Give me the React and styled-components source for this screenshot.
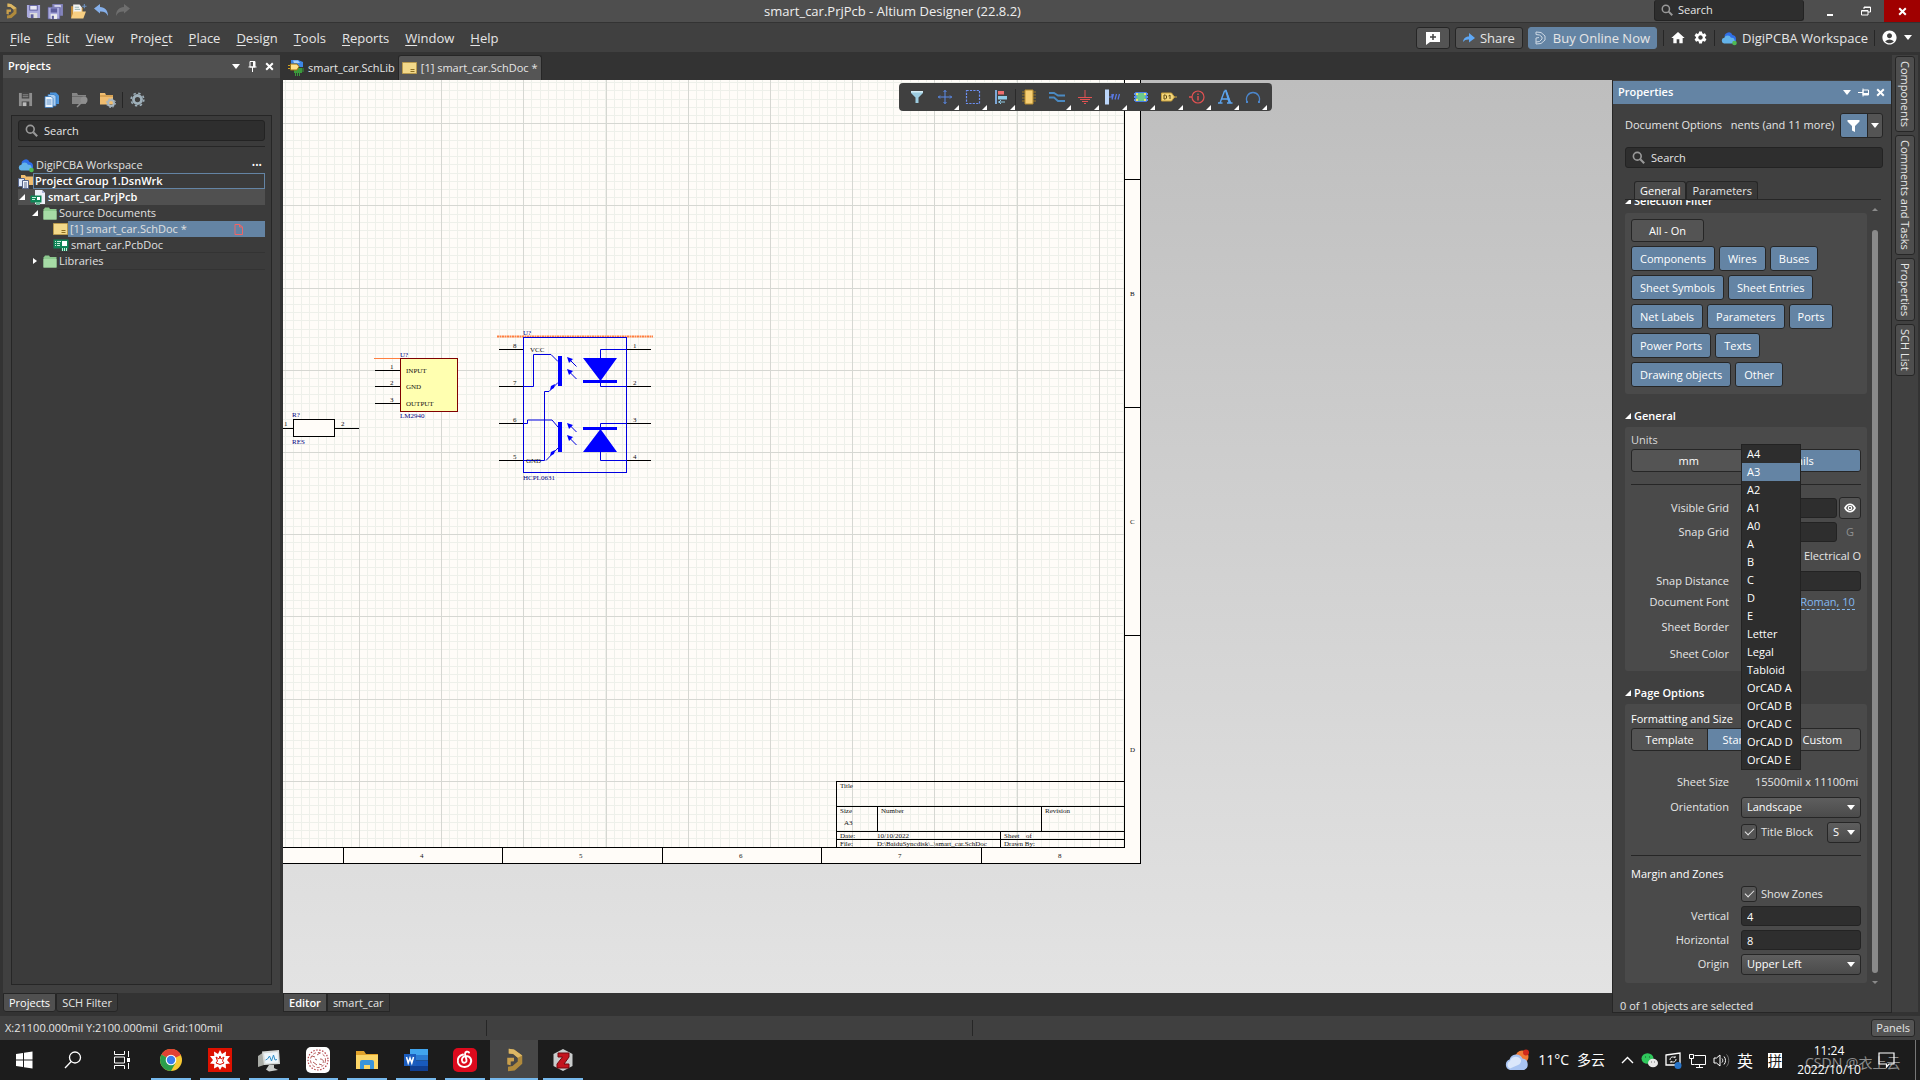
import React from 'react'
import styled, { createGlobalStyle, css } from 'styled-components'
import { MdAccountCircle, MdHome, MdSettings } from 'react-icons/md'

const selectionRows = [
  ['Components', 'Wires', 'Buses'],
  ['Sheet Symbols', 'Sheet Entries'],
  ['Net Labels', 'Parameters', 'Ports'],
  ['Power Ports', 'Texts'],
  ['Drawing objects', 'Other'],
]

const sheetSizes = [
  'A4', 'A3', 'A2', 'A1', 'A0', 'A', 'B', 'C', 'D', 'E', 'Letter', 'Legal',
  'Tabloid', 'OrCAD A', 'OrCAD B', 'OrCAD C', 'OrCAD D', 'OrCAD E',
]

// [before, accelerator, after]
const menus = [
  ['', 'F', 'ile'], ['', 'E', 'dit'], ['', 'V', 'iew'], ['Proje', 'c', 't'],
  ['', 'P', 'lace'], ['', 'D', 'esign'], ['', 'T', 'ools'], ['', 'R', 'eports'],
  ['', 'W', 'indow'], ['', 'H', 'elp'],
]

/* ---------- icons ---------- */

const Svg = ({ size = 16, w, h, box = '0 0 16 16', children }) => (
  <svg width={w || size} height={h || size} viewBox={box} fill='none' aria-hidden='true'>
    {children}
  </svg>
)

const AltiumLogo = ({ size = 16 }) => (
  <Svg size={size}>
    <path d='M4.500 .5L8 1l5.500 4v5.500L8.500 15 4 15.500v-3l3-.5 3.500-3V6.500L7.500 4l-3-.3z' fill='#b08a3c' />
    <path d='M4.500 .5L8 1l5.500 4-3 1.500L7.500 4l-3-.3z' fill='#dcb765' />
    <path d='M3.500 6.500L8 6.500v2.300L5.800 9v2.500L3.500 11z' fill='#caa04c' />
  </Svg>
)

const SearchIcon = ({ size = 13, color = '#999' }) => (
  <Svg size={size}>
    <circle cx='6.500' cy='6.500' r='4.800' stroke={color} strokeWidth='2' />
    <path d='M10.200 10.200L15 15' stroke={color} strokeWidth='2.600' />
  </Svg>
)

const Disk = ({ color = '#a9a9dc', dark = '#5c5c9c' }) => (
  <Svg size={15}>
    <path d='M1 1h14v14H2.500L1 13.500z' fill={color} />
    <path d='M3.500 1h9v6h-9z' fill={dark} />
    <path d='M4.500 2h7v4h-7z' fill='#e8e8f4' />
    <path d='M4 9.500h8V15H4z' fill='#ddd' />
    <path d='M5 11h3v4H5z' fill={dark} />
  </Svg>
)

const GreyDisk = () => (
  <Svg size={15}>
    <path d='M1 1h14v14H1z' fill='#8e8e8e' />
    <path d='M4 1h8v6H4zM4 10h8v5H4z' fill='#444' />
    <path d='M5 3h6M5 5h6' stroke='#8e8e8e' />
    <path d='M5 11h4v4H5z' fill='#bbb' />
  </Svg>
)

const DiskStack = () => (
  <Svg size={17}>
    <path d='M5 1h10v11H5z' fill='#8484bc' />
    <path d='M7 2h6v2H7z' fill='#ddddf0' />
    <path d='M1 4h11v11H1z' fill='#a9a9dc' stroke='#5c5c9c' strokeWidth='.6' />
    <path d='M3.500 5h6v4h-6z' fill='#5c5c9c' />
    <path d='M3.500 10.500h6V15h-6z' fill='#eee' />
    <path d='M4.500 12h2v3h-2z' fill='#5c5c9c' />
  </Svg>
)

const OpenFolder = () => (
  <Svg size={17}>
    <path d='M1 3h5l1 1.500h5V14H1z' fill='#c58f3c' />
    <path d='M3 1.500h6L11 4v6H3z' fill='#f3f3f3' />
    <path d='M4.500 4h4M4.500 6h5' stroke='#8aa' strokeWidth='.8' />
    <path d='M3.500 8H15l-2.500 6.500H1z' fill='#f8cf82' />
    <path d='M13.500 1v4M11.500 3h4' stroke='#6f95c4' />
  </Svg>
)

const Undo = ({ flip, color = '#86b0ea' }) => (
  <Svg size={16}>
    <g transform={flip ? 'translate(16 0) scale(-1 1)' : undefined}>
      <path d='M1 5.500L7 1v3c5 0 8 3.500 8 9-1.500-3.500-4-4.700-8-4.500v2z' fill={color} />
    </g>
  </Svg>
)

const Cloud = ({ size = 16 }) => (
  <Svg size={size}>
    <path d='M4 8a4 4 0 0 1 7.500-3A4 4 0 0 1 15 9v3H4z' fill='#2f6fe8' />
    <path d='M3 13.500a2.900 2.900 0 0 1 .3-5.700 3.600 3.600 0 0 1 6.700 0 2.900 2.900 0 0 1 1.500 5.700z' fill='#63b3ea' />
    <circle cx='13.500' cy='13' r='2.300' fill='#4fb955' />
  </Svg>
)

const Caret = ({ w = 8, color = '#fff' }) => (
  <Svg w={w} h={w / 2 + 1} box='0 0 8 5'>
    <path d='M0 0h8L4 5z' fill={color} />
  </Svg>
)

const Pin = ({ side }) => (
  <Svg size={11} box='0 0 11 11'>
    <g transform={side ? 'rotate(90 5.5 5.5)' : undefined}>
      <path d='M3 .5h5v5.500H3zM1.500 6h8M5.500 6v5' stroke='#fff' />
      <path d='M6 1h2v5H6z' fill='#fff' />
    </g>
  </Svg>
)

const Cross = ({ size = 9 }) => (
  <Svg size={size} box='0 0 9 9'>
    <path d='M1.200 1.200l6.600 6.600M7.800 1.200L1.200 7.800' stroke='#fff' strokeWidth='2' />
  </Svg>
)

const Expander = ({ closed }) => (
  <Svg size={6} box='0 0 6 6'>
    {closed ? <path d='M1 0l4 3-4 3z' fill='#fff' /> : <path d='M6 0v6H0z' fill='#fff' />}
  </Svg>
)

const Folder = () => (
  <Svg w={14} h={13} box='0 0 14 13'>
    <path d='M1 2l1-1.500h4L7 2h6.500v10.500H.5V2z' fill='#8cc98e' />
    <path d='M.5 4h13v8.500H.5z' fill='#a6dba6' />
  </Svg>
)

const SchIcon = () => (
  <Svg w={15} h={12} box='0 0 15 12'>
    <path d='M.5.5h14v11H.5z' fill='#f3d98a' stroke='#b99a4e' />
    <path d='M8.500 7.500h4M8.500 9.500h4' stroke='#8d6f22' />
  </Svg>
)

const PcbIcon = () => (
  <Svg w={16} h={12} box='0 0 16 12'>
    <path d='M.5.5h15v9h-1V12h-6V9.500h-8z' fill='#0f8557' />
    <path d='M2 2.500h1M4 2.500h4M2 4.500h1M4 4.500h3M2 6.500h1M4 6.500h3M9.500 9v3M11.500 9v3M13.500 9v3' stroke='#c6f0dc' />
    <path d='M9 2h5v5H9z' fill='#fff' />
  </Svg>
)

const PrjIcon = () => (
  <Svg w={16} h={15} box='0 0 16 15'>
    <path d='M5 0h7l3 3v11H5z' fill='#eef0fa' />
    <path d='M12 0v3h3z' fill='#a9b4d8' />
    <path d='M.5 5.500h11v7H10V15H6v-2.500H.5z' fill='#0f8557' />
    <path d='M2 7.500h4M2 9.500h3M7 12v3M9 12v3' stroke='#c6f0dc' />
    <path d='M7 7h3v3H7z' fill='#fff' />
  </Svg>
)

const GroupIcon = () => (
  <Svg w={15} h={15} box='0 0 15 15'>
    <path d='M3 1h4l1 1.500h7V11H3z' fill='#f0bd70' />
    <path d='M.5 4.500h6v8h-6z' fill='#dfe8f8' stroke='#56658a' />
    <path d='M4.500 6.500h6v8h-6z' fill='#eef3fc' stroke='#56658a' />
    <path d='M6 9h3M6 11h3M6 13h3' stroke='#56658a' />
  </Svg>
)

const LibIcon = () => (
  <Svg w={16} h={17} box='0 0 16 17'>
    <path d='M3 1h7l5 2v5H3z' fill='#3c86e6' />
    <path d='M5 1.500h5L12 4H6z' fill='#a4cdfa' />
    <path d='M6 9h8v5H6z' fill='#3a9a3c' />
    <path d='M7.500 14v3M9.500 14v3M11.500 14v3M14 10h2M14 12h2' stroke='#3a9a3c' />
    <path d='M2.500 5H9l2 2.500L9 11H2.500z' fill='#ffe18c' stroke='#9a6f10' />
    <path d='M0 6.500h2M0 9.500h2' stroke='#d0a020' />
  </Svg>
)

const CopyDocs = () => (
  <Svg size={16}>
    <path d='M6 .5h6l3 3V12H6z' fill='#4a94dd' />
    <path d='M4 2.500h6l2 2V14H4z' fill='#a9cdf0' stroke='#3577bd' strokeWidth='.8' />
    <path d='M1 4.500h6l2 2V15.500H1z' fill='#eaf4fd' stroke='#3577bd' strokeWidth='.8' />
    <path d='M2.500 8h5M2.500 10h5M2.500 12h5' stroke='#3577bd' strokeWidth='.8' />
  </Svg>
)

const FolderSearch = () => (
  <Svg w={17} h={16} box='0 0 17 16'>
    <path d='M1 1h5l1 2h8v9H1z' fill='#858585' />
    <path d='M1 4.500h14' stroke='#6a6a6a' />
    <circle cx='13' cy='8' r='3.500' fill='#8f8f8f' />
    <path d='M10.500 10.500L6 15' stroke='#8f8f8f' strokeWidth='1.500' />
  </Svg>
)

const FolderGear = () => (
  <Svg w={17} h={16} box='0 0 17 16'>
    <path d='M1 1h5l1 2h7v9.500H1z' fill='#f0bd70' />
    <path d='M1 4h13' stroke='#c08a3a' />
    <circle cx='12' cy='11' r='3' stroke='#a8b6c0' strokeWidth='2' />
    <circle cx='12' cy='11' r='4.500' stroke='#a8b6c0' strokeDasharray='1.700 1.830' />
  </Svg>
)

const GreyGear = () => (
  <Svg size={15}>
    <circle cx='8' cy='8' r='4.300' stroke='#9fb0ba' strokeWidth='3' />
    <circle cx='8' cy='8' r='6.800' stroke='#9fb0ba' strokeWidth='1.600' strokeDasharray='2.600 2.740' />
  </Svg>
)

const Funnel = ({ color = '#fff', size = 13 }) => (
  <Svg size={size} box='0 0 13 13'>
    <path d='M.5 1h12v1.500L8 7v6L5 11.500V7L.5 2.500z' fill={color} />
  </Svg>
)

const Eye = () => (
  <Svg w={12} h={10} box='0 0 12 10'>
    <path d='M1 5c1.500-2.800 3-3.700 5-3.700S9.500 2.200 11 5C9.500 7.800 8 8.700 6 8.700S2.500 7.800 1 5z' stroke='#fff' strokeWidth='1.600' />
    <circle cx='6' cy='5' r='1.700' stroke='#fff' strokeWidth='1.200' />
  </Svg>
)

const toolIcons = [
  <><path d='M2 2h12v2L9.500 8.500V14h-3V8.500L2 4z' fill='#9ccbe0' /><path d='M2 2h12v1.500H2z' fill='#d5ecf5' /></>,
  <path d='M8 1v14M1 8h14M6.500 3L8 1.500 9.500 3M6.500 13L8 14.500 9.500 13M3 6.500L1.500 8 3 9.500M13 6.500L14.500 8 13 9.500' stroke='#5a8ae8' />,
  <path d='M1.500 1.500h13v13h-13z' stroke='#6c8ff2' strokeWidth='1.200' strokeDasharray='2.200 1.200' />,
  <><path d='M2 1h2v14H2z' fill='#7ea8d8' /><path d='M5 2h6v3.500H5z' fill='#ef6f6f' /><path d='M5 7h9v3.500H5z' fill='#8fcbe6' /><path d='M5 13h7M8 11l-2 2 2 2' stroke='#8fcbe6' /></>,
  <><path d='M1 3h14M1 6h14M1 9h14M1 12h14' stroke='#9a7624' strokeWidth='1.200' /><path d='M4 1h8v14H4z' fill='#f7cf74' stroke='#b58a2d' /></>,
  <path d='M0 4h5l4 2.500h7M0 8.500h5l4 3.500h7' stroke='#4b8ac2' strokeWidth='1.800' />,
  <path d='M8 1v7M1 8.500h14M3 10.500h10M5 12.500h6M7 14.500h2' stroke='#e25252' />,
  <><path d='M0 .5h4v15H0z' fill='#bcd6fa' /><path d='M4 8h3M7 10.500L8.500 5M10 10.500L11.500 5M13 10.500L14.500 5M7 5v3' stroke='#5a7bea' strokeWidth='1.200' /></>,
  <><path d='M2.500 3.500h11v9h-11z' fill='#6ec98d' stroke='#4a7de6' /><path d='M1 5h3M1 8h3M1 11h3M12 5h3M12 8h3M12 11h3' stroke='#5a8df0' strokeWidth='2' /><path d='M3 4h2v2H3zM11 4h2v2h-2zM3 10h2v2H3zM11 10h2v2h-2z' fill='#f0e070' /></>,
  <><path d='M.5 4h10l3 4-3 4H.5zM13 8h3' fill='#f3d67c' stroke='#c8a03c' /><path d='M3 6v4h1.500l1-1V7l-1-1zM7.500 7L9 6v4' stroke='#5f4812' /></>,
  <><circle cx='9' cy='8' r='6' stroke='#e25252' strokeWidth='1.200' /><path d='M0 8h3M9 7v4.500M9 4.500V6' stroke='#e25252' strokeWidth='1.400' /></>,
  <><path d='M7.500 1.500h1.500L13.500 14M7.500 2L3 14M5 10h6' stroke='#5ca4ee' strokeWidth='1.400' /><path d='M8 1.500h1.500L14 14h-2.500z' fill='#5ca4ee' /><path d='M1 14h4.500M10 14h5.500' stroke='#5ca4ee' strokeWidth='1.400' /></>,
  <><path d='M2 12.500a6.500 6.500 0 1 1 12 0' stroke='#4b86cc' strokeWidth='1.300' /><path d='M1 12h2v2H1zM13 12h2v2h-2z' fill='#4b86cc' /></>,
]

/* ---------- schematic ---------- */

// sheet coordinates: 8.22px is 100mil, origin is the visible top left corner
const range = (start, step, end) => {
  const out = []
  for (let v = start; v < end; v += step) out.push(v)
  return out
}

const INNER_X = 841
const INNER_Y = 767
const GRID = 8.22

const Schematic = () => (
  <SheetSvg width='858' height='784' viewBox='0 0 858 784'>
    <rect width='858' height='784' fill='#fffcf8' />
    <g shapeRendering='crispEdges' stroke='#eef0ea'>
      {range(-5.900, GRID, INNER_X).map((x) => (
        <path key={x} d={`M${x} 0V${INNER_Y}`} />
      ))}
      {range(2.600, GRID, INNER_Y).map((y) => (
        <path key={y} d={`M0 ${y}H${INNER_X}`} />
      ))}
    </g>
    <g shapeRendering='crispEdges' stroke='#d6d7d2'>
      {range(76.500, GRID * 10, INNER_X).map((x) => (
        <path key={x} d={`M${x} 0V${INNER_Y}`} />
      ))}
      {range(43.700, GRID * 10, INNER_Y).map((y) => (
        <path key={y} d={`M0 ${y}H${INNER_X}`} />
      ))}
    </g>

    {/* sheet border, zones and title block */}
    <g shapeRendering='crispEdges' stroke='#000' fill='none'>
      <path d='M857.500 0V783.500H0M841.500 0V767.500H0' />
      <path d='M841 99.500h16M841 327.500h16M841 555.500h16' />
      <path d='M60.500 767v16M219.500 767v16M379.500 767v16M538.500 767v16M698.500 767v16' />
      <path d='M553.500 767V701.500H841M553 726.500h288M553 751.500h288M553 759.500h288' />
      <path d='M594.500 726v25M758.500 726v25M717.500 751v16' />
    </g>
    <SheetText>
      <text x='847' y='216'>B</text>
      <text x='847' y='444'>C</text>
      <text x='847' y='672'>D</text>
      <text x='137' y='778'>4</text>
      <text x='296' y='778'>5</text>
      <text x='456' y='778'>6</text>
      <text x='615' y='778'>7</text>
      <text x='775' y='778'>8</text>
      <text x='557' y='708'>Title</text>
      <text x='557' y='733'>Size</text>
      <text x='561' y='745'>A3</text>
      <text x='598' y='733'>Number</text>
      <text x='762' y='733'>Revision</text>
      <text x='557' y='758'>Date:</text>
      <text x='594' y='758'>10/10/2022</text>
      <text x='721' y='758'>Sheet</text>
      <text x='743' y='758'>of</text>
      <text x='557' y='766'>File:</text>
      <text x='594' y='766'>D:\BaiduSyncdisk\..\smart_car.SchDoc</text>
      <text x='721' y='766'>Drawn By:</text>
    </SheetText>

    {/* R? */}
    <g shapeRendering='crispEdges' stroke='#000'>
      <path d='M0 348.500h10M52 348.500h24' />
      <path d='M10.500 339.500h41v17h-41z' fill='#fffcf8' />
    </g>
    <SheetText>
      <text x='1' y='346'>1</text>
      <text x='58' y='346'>2</text>
    </SheetText>
    <SheetText $blue>
      <text x='9' y='337'>R?</text>
      <text x='9' y='364'>RES</text>
    </SheetText>

    {/* LM2940 */}
    <g shapeRendering='crispEdges'>
      <path d='M91 278.500h27' stroke='#ff7f40' />
      <path d='M92 290.500h26M92 306.500h26M92 323.500h26' stroke='#000' />
      <path d='M117.500 278.500h57v53h-57z' fill='#ffffb0' stroke='#800000' />
    </g>
    <SheetText>
      <text x='107' y='289'>1</text>
      <text x='107' y='305'>2</text>
      <text x='107' y='322'>3</text>
      <text x='123' y='293'>INPUT</text>
      <text x='123' y='309'>GND</text>
      <text x='123' y='326'>OUTPUT</text>
    </SheetText>
    <SheetText $blue>
      <text x='117' y='277'>U?</text>
      <text x='117' y='338'>LM2940</text>
    </SheetText>

    {/* HCPL0631 */}
    <path d='M214 256.500h156' stroke='#ff7f40' strokeWidth='2' strokeDasharray='2 .5' />
    <g shapeRendering='crispEdges'>
      <path d='M216 269.500h25M216 306.500h25M216 343.500h25M216 380.500h25' stroke='#000' />
      <path d='M344 269.500h24M344 306.500h24M344 343.500h24M344 380.500h24' stroke='#000' />
      <path d='M240.500 257.500h103v135h-103z' stroke='#0000e0' fill='none' />
    </g>
    <g stroke='#0000e0' fill='none'>
      <path d='M240 306.500h10.500v-32H268l7 7M275 302.500l-9 9h-4.500v69H240' />
      <path d='M240 343.500h4.500v-3.500H269l6 7M275 368l-12 12.500' />
      <path d='M343 269.500h-25.500V278M317.500 302v4.500H343M343 343.500h-25.500v4M317.500 372v8.500H343' />
      <path d='M293.500 286.500l-7-7M293.500 299l-7-7M293.500 352l-7-7M293.500 365l-7-7' />
    </g>
    <g fill='#0000ff'>
      <path d='M275 276h4v30h-4zM275 342h4v30h-4z' />
      <path d='M300 278h34l-16.500 23zM300 300h34v3h-34zM300 347h34v3h-34zM317.500 349L334 372h-34z' />
      <path d='M284 277l6 2-4 4zM284 289l6 2-4 4zM284 343l6 2-4 4zM284 355l6 2-4 4z' />
      <path d='M272 304l-1 4-4 2 1-4zM272 370l-1 4-4 2 1-4z' />
    </g>
    <SheetText>
      <text x='230' y='268'>8</text>
      <text x='230' y='305'>7</text>
      <text x='230' y='342'>6</text>
      <text x='230' y='379'>5</text>
      <text x='350' y='268'>1</text>
      <text x='350' y='305'>2</text>
      <text x='350' y='342'>3</text>
      <text x='350' y='379'>4</text>
      <text x='247' y='272'>VCC</text>
      <text x='243' y='383'>GND</text>
    </SheetText>
    <SheetText $blue>
      <text x='240' y='255'>U?</text>
      <text x='240' y='400'>HCPL0631</text>
    </SheetText>
  </SheetSvg>
)

/* ---------- panels ---------- */

const ProjectsPanel = () => (
  <LeftColumn>
    <Panel>
      <PanelHeader>
        <h2>Projects</h2>
        <Caret />
        <Pin />
        <Cross />
      </PanelHeader>
      <PanelTools>
        <IconButton aria-label='Save'><GreyDisk /></IconButton>
        <IconButton aria-label='Copy'><CopyDocs /></IconButton>
        <IconButton aria-label='Find'><FolderSearch /></IconButton>
        <IconButton aria-label='Folder options'><FolderGear /></IconButton>
        <Separator />
        <IconButton aria-label='Settings'><GreyGear /></IconButton>
      </PanelTools>
      <TreeBox>
        <SearchField>
          <SearchIcon />
          <input aria-label='Search projects' placeholder='Search' />
        </SearchField>
        <TreeLine />
        <TreeRow>
          <Cloud />
          <TreeLabel>DigiPCBA Workspace</TreeLabel>
          <Dots>•••</Dots>
        </TreeRow>
        <TreeRow>
          <GroupIcon />
          <TreeLabel $bold $outlined>Project Group 1.DsnWrk</TreeLabel>
        </TreeRow>
        <TreeRow $indent={1} $raised>
          <Expander />
          <PrjIcon />
          <TreeLabel $bold>smart_car.PrjPcb</TreeLabel>
        </TreeRow>
        <TreeRow $indent={14}>
          <Expander />
          <Folder />
          <TreeLabel>Source Documents</TreeLabel>
        </TreeRow>
        <TreeRow $indent={35}>
          <SchIcon />
          <TreeLabel $active>
            [1] smart_car.SchDoc *
            <Svg w={9} h={11} box='0 0 9 11'>
              <path d='M1 .5h4.500L8.500 3v7.500H1zM5.500.5V3h3' stroke='#f06464' />
            </Svg>
          </TreeLabel>
        </TreeRow>
        <TreeRow $indent={35}>
          <PcbIcon />
          <TreeLabel>smart_car.PcbDoc</TreeLabel>
        </TreeRow>
        <TreeRow $indent={14}>
          <Expander closed />
          <Folder />
          <TreeLabel $ruled>Libraries</TreeLabel>
        </TreeRow>
      </TreeBox>
    </Panel>
    <BottomTabs>
      <BottomTab $active>Projects</BottomTab>
      <BottomTab>SCH Filter</BottomTab>
    </BottomTabs>
  </LeftColumn>
)

const Dropdown = ({ id, value, label, small }) => (
  <SelectBox $small={small}>
    <select id={id} aria-label={label} defaultValue={value}>
      <option>{value}</option>
    </select>
    <Caret />
  </SelectBox>
)

const PropertiesPanel = () => (
  <RightColumn>
    <PanelHeader $blue>
      <h2>Properties</h2>
      <Caret />
      <Pin side />
      <Cross />
    </PanelHeader>
    <ScopeRow>
      <span>Document Options</span>
      <span>nents (and 11 more)</span>
      <FilterGroup>
        <button aria-label='Filter'><Funnel /></button>
        <button aria-label='Filter options'><Caret /></button>
      </FilterGroup>
    </ScopeRow>
    <SearchField $wide>
      <SearchIcon />
      <input aria-label='Search properties' placeholder='Search' />
    </SearchField>
    <PropertyTabs>
      <PropertyTab $active>General</PropertyTab>
      <PropertyTab>Parameters</PropertyTab>
    </PropertyTabs>
    <ScrollArea>
      <Sections>
        <SectionTitle $clipped><Expander />Selection Filter</SectionTitle>
        <Section>
          <FilterButton $all>All - On</FilterButton>
          {selectionRows.map((row) => (
            <FilterRow key={row[0]}>
              {row.map((name) => (
                <FilterButton key={name}>{name}</FilterButton>
              ))}
            </FilterRow>
          ))}
        </Section>

        <SectionTitle><Expander />General</SectionTitle>
        <Section>
          <GroupLabel>Units</GroupLabel>
          <Segmented>
            <button>mm</button>
            <button className='on'>mils</button>
          </Segmented>
          <Rule />
          <Field $h={24}>
            <label htmlFor='visible'>Visible Grid</label>
            <Inline>
              <TextInput id='visible' />
              <EyeButton aria-label='Toggle grid'><Eye /></EyeButton>
            </Inline>
          </Field>
          <Field $h={24}>
            <label htmlFor='snap'>Snap Grid</label>
            <Inline>
              <TextInput id='snap' />
              <GridKey>G</GridKey>
            </Inline>
          </Field>
          <Field $h={24}>
            <span />
            <Clipped>Electrical O</Clipped>
          </Field>
          <Field $h={26}>
            <label htmlFor='distance'>Snap Distance</label>
            <TextInput id='distance' />
          </Field>
          <Field $h={16}>
            <span>Document Font</span>
            <FontLink href='#font'>Times New Roman, 10</FontLink>
          </Field>
          <Field $h={34}><span>Sheet Border</span></Field>
          <Field $h={20}><span>Sheet Color</span></Field>
        </Section>

        <SectionTitle><Expander />Page Options</SectionTitle>
        <Section>
          <GroupLabel $bright>Formatting and Size</GroupLabel>
          <Segmented>
            <button>Template</button>
            <button className='on'>Standard</button>
            <button>Custom</button>
          </Segmented>
          <SizeField $h={23}>
            <span>Sheet Size</span>
            <SizeValue>
              <span>15500mil</span>
              <span>x</span>
              <span>11100mi</span>
            </SizeValue>
            <SizeMenu role='listbox' aria-label='Sheet Size'>
              {sheetSizes.map((size) => (
                <SizeOption key={size} role='option' aria-selected={size === 'A3'}>
                  {size}
                </SizeOption>
              ))}
            </SizeMenu>
          </SizeField>
          <Field $h={28}>
            <label htmlFor='orientation'>Orientation</label>
            <Dropdown id='orientation' value='Landscape' />
          </Field>
          <Field $h={22}>
            <span />
            <Inline>
              <Check><input type='checkbox' defaultChecked />Title Block</Check>
              <Dropdown label='Title block style' value='S' small />
            </Inline>
          </Field>
          <Rule />
          <GroupLabel $bright>Margin and Zones</GroupLabel>
          <Field $h={21}>
            <span />
            <Check><input type='checkbox' defaultChecked />Show Zones</Check>
          </Field>
          <Field $h={24}>
            <label htmlFor='vertical'>Vertical</label>
            <TextInput id='vertical' defaultValue='4' />
          </Field>
          <Field $h={24}>
            <label htmlFor='horizontal'>Horizontal</label>
            <TextInput id='horizontal' defaultValue='8' />
          </Field>
          <Field $h={24}>
            <label htmlFor='origin'>Origin</label>
            <Dropdown id='origin' value='Upper Left' />
          </Field>
        </Section>
      </Sections>
      <ScrollTrack>
        <Svg w={6} h={3} box='0 0 6 3'><path d='M0 3l3-3 3 3z' fill='#8a8a8a' /></Svg>
        <i />
        <Svg w={6} h={3} box='0 0 6 3'><path d='M0 0l3 3 3-3z' fill='#8a8a8a' /></Svg>
      </ScrollTrack>
    </ScrollArea>
    <Selected>0 of 1 objects are selected</Selected>
  </RightColumn>
)

/* ---------- taskbar ---------- */

const apps = [
  { name: 'Chrome', icon: (
    <Svg size={24} box='0 0 24 24'>
      <circle cx='12' cy='12' r='11' fill='#f7c933' />
      <path d='M12 12L2.500 6.500A11 11 0 0 1 21.800 7z' fill='#e14234' />
      <path d='M12 12L2.500 6.500A11 11 0 0 0 12 23l4.500-8z' fill='#2b9e4b' />
      <path d='M12 1a11 11 0 0 1 9.800 6H12z' fill='#e14234' />
      <circle cx='12' cy='12' r='5.300' fill='#fff' />
      <circle cx='12' cy='12' r='4.200' fill='#3b7ded' />
    </Svg>
  ) },
  { name: 'Mathematica', icon: (
    <Svg size={24} box='0 0 24 24'>
      <path d='M0 0h24v24H0z' fill='#dd1100' />
      <path d='M12 2l2 4 4-2.500-.3 4.500 4.300 0-3 4 3 3.500-4.300.5.3 4.500-4-2-2 3.500-2-3.500-4 2 .3-4.500L2 15.500 5 12 2 8h4.300L6 3.500 10 6z' fill='#fff' />
      <path d='M8 9l3 2 1-3 1 3 3-2-1.500 4L16 15l-4 1.500L8 15l1.500-2z' stroke='#dd1100' />
    </Svg>
  ) },
  { name: 'Monitor', icon: (
    <Svg size={24} box='0 0 24 24'>
      <path d='M1 8l6-4v13l-6 2z' fill='#a9aca6' />
      <path d='M5 3.500L22 2l1 14-16 1z' fill='#d9dcda' />
      <path d='M7 5.500L20.500 4l.8 10.500L8.500 15.500z' fill='#eef6fb' />
      <path d='M8.500 12l2-1 2-3 2 5 2-6 1.500 5 2-.5' stroke='#2f8fc8' />
      <path d='M12 17h5v3l4 2-9 1.500-3-2z' fill='#c9ccca' />
    </Svg>
  ) },
  { name: 'Canvas', icon: (
    <Svg size={26} box='0 0 26 26'>
      <rect x='1' width='24' height='26' rx='5' fill='#fff' />
      <circle cx='13' cy='13' r='10' stroke='#b5434a' strokeWidth='1.200' strokeDasharray='1.500 1.500' />
      <circle cx='13' cy='13' r='7.500' stroke='#a33' strokeWidth='.8' strokeDasharray='3 2' />
      <path d='M7 9l3 1M15 12c3 0 4 2 3 4M8 15l4 3M12 8l3-2M10 12l2 1M14 17l3 1' stroke='#933' strokeWidth='.8' />
    </Svg>
  ) },
  { name: 'Explorer', icon: (
    <Svg size={24} box='0 0 24 24'>
      <path d='M1 3h8l2 3h12v5H1z' fill='#e2a32b' />
      <path d='M1 7h22v14H1z' fill='#fcd667' />
      <path d='M5 21v-7a2 2 0 0 1 2-2h10a2 2 0 0 1 2 2v7h-4v-4H9v4z' fill='#3a94dc' />
    </Svg>
  ) },
  { name: 'Word', icon: (
    <Svg size={24} box='0 0 24 24'>
      <path d='M6 1h18v6H6z' fill='#41a5ee' />
      <path d='M6 7h18v5.500H6z' fill='#2b7cd3' />
      <path d='M6 12.500h18V18H6z' fill='#185abd' />
      <path d='M6 18h18v5H6z' fill='#103f91' />
      <path d='M0 6h12v12H0z' fill='#1b5dbe' />
      <path d='M2.500 9l1.700 6L6 10l1.800 5 1.700-6' stroke='#fff' strokeWidth='1.500' />
    </Svg>
  ) },
  { name: 'Music', icon: (
    <Svg size={24} box='0 0 24 24'>
      <rect width='24' height='24' rx='5' fill='#dd0a1d' />
      <path d='M10 6.500c-4 1-6 4-5 8 1.500 5 9 6 12 2 3-4.500 0-8.500-4-8.500-4 .2-5 4-3.500 6 1.600 1.500 4.500.5 4-2L12 6c.2-2.500 2.500-3 4-1.500' stroke='#fff' strokeWidth='1.900' strokeLinecap='round' />
    </Svg>
  ) },
  { name: 'Altium Designer', active: true, icon: <AltiumLogo size={24} /> },
  { name: 'Z', icon: (
    <Svg size={24} box='0 0 24 24'>
      <path d='M12 1l9.500 5v12L12 23l-9.500-5V6z' fill='#c9cccc' />
      <path d='M7 5h11v4l-5 7h5v4H6v-4l5.500-7H7z' fill='#c4141e' stroke='#70090e' />
    </Svg>
  ) },
]

const Taskbar = () => (
  <TaskbarBox>
    <TaskButton aria-label='Start'>
      <Svg size={18} box='0 0 18 18'>
        <path d='M1 3l7-1v6.500H1zM9 1.800L17.500.5v8H9zM1 9.500h7V16l-7-1zM9 9.500h8.500v8L9 16.200z' fill='#fff' />
      </Svg>
    </TaskButton>
    <TaskButton aria-label='Search'>
      <Svg size={18} box='0 0 18 18'>
        <circle cx='11' cy='6.500' r='5.500' stroke='#fff' strokeWidth='1.300' />
        <path d='M7.200 10.500L1 17' stroke='#fff' strokeWidth='1.300' />
      </Svg>
    </TaskButton>
    <TaskButton aria-label='Task view'>
      <Svg size={18} box='0 0 18 18'>
        <path d='M1.500 0v3.500h10V0M1.500 18v-3.500h10V18M1.500 6h10v6h-10zM15.500 0v6M15.500 12v6' stroke='#fff' />
        <path d='M14 7h3v4h-3z' fill='#fff' />
      </Svg>
    </TaskButton>
    {apps.map((app) => (
      <TaskButton key={app.name} aria-label={app.name} $app $active={app.active}>
        {app.icon}
      </TaskButton>
    ))}
    <Tray>
      <Weather>
        <Svg w={26} h={22} box='0 0 26 22'>
          <circle cx='18' cy='8' r='6.500' fill='#f07a35' />
          <circle cx='22' cy='3.500' r='3' fill='#d02a1c' />
          <path d='M6 21a5.500 5.500 0 0 1-.5-10.500 7 7 0 0 1 13-1A6 6 0 0 1 20 21z' fill='#a9c4f2' />
          <path d='M6 19.500a4 4 0 0 1 0-7.500 6 6 0 0 1 11-1 5 5 0 0 1-3 5z' fill='#dbe7fb' />
        </Svg>
        <span>11°C</span>
        <span>多云</span>
      </Weather>
      <Svg w={13} h={8} box='0 0 13 8'><path d='M1 7l5.500-5.500L12 7' stroke='#fff' strokeWidth='1.400' /></Svg>
      <Svg size={17} box='0 0 17 17'>
        <ellipse cx='6.500' cy='6.500' rx='6' ry='5.300' fill='#2fc75b' />
        <ellipse cx='12' cy='11' rx='5' ry='4.300' fill='#e8e8e8' />
        <path d='M4 5h1M8 5h1' stroke='#145c2a' />
        <path d='M10 10h1M13 10h1' stroke='#777' />
      </Svg>
      <Svg size={17} box='0 0 17 17'>
        <path d='M1 3l14-2v12H1z' stroke='#fff' strokeWidth='1.300' />
        <path d='M5 8c0-3 3-4 5-2V4M11 7c0 3-3 4-5 2v2' stroke='#fff' />
        <circle cx='13' cy='13.500' r='3.500' fill='#2673c8' />
      </Svg>
      <Svg size={17} box='0 0 17 17'>
        <path d='M5.500 3.500h11v9h-11M10.500 13v3M7 15.500h7M.5 2.500h4v4h-4zM2.500 6.500v6h3' stroke='#fff' />
      </Svg>
      <Svg size={17} box='0 0 17 17'>
        <path d='M1 6v5h2.500L7 14V3L3.500 6z' stroke='#fff' />
        <path d='M9 6.500c1 1 1 3 0 4M11 4.500c2 2 2 6 0 8' stroke='#fff' />
        <path d='M13.500 2.500c3 3 3 9 0 12' stroke='#777' />
      </Svg>
      <Ime>英</Ime>
      <Ime $boxed>拼</Ime>
      <Clock>
        <span>11:24</span>
        <span>2022/10/10</span>
        <Watermark>CSDN @衣上云</Watermark>
      </Clock>
      <Svg size={17} box='0 0 17 17'>
        <path d='M1 1h15v11h-5l-2.500 3v-3H1z' stroke='#fff' strokeWidth='1.200' />
      </Svg>
      <DesktopEdge />
    </Tray>
  </TaskbarBox>
)

const App = () => (
  <Page>
    <GlobalStyle />
    <TitleBar>
      <QuickAccess>
        <AltiumLogo />
        <IconButton aria-label='Save'><Disk /></IconButton>
        <IconButton aria-label='Save all'><DiskStack /></IconButton>
        <IconButton aria-label='Open'><OpenFolder /></IconButton>
        <IconButton aria-label='Undo'><Undo /></IconButton>
        <IconButton aria-label='Redo'><Undo flip color='#6e6e6e' /></IconButton>
      </QuickAccess>
      <h1>smart_car.PrjPcb - Altium Designer (22.8.2)</h1>
      <TitleSearch>
        <SearchIcon size={12} />
        <input aria-label='Search' placeholder='Search' />
      </TitleSearch>
      <WindowButton aria-label='Minimize'>
        <Svg size={10} box='0 0 10 10'><path d='M2 9h6' stroke='#fff' strokeWidth='2' /></Svg>
      </WindowButton>
      <WindowButton aria-label='Restore'>
        <Svg size={10} box='0 0 10 10'><path d='M3 3V1h6.500v5H7M.5 4.500H7v4.500H.5zM3 1.500h6M1 5h6' stroke='#fff' /></Svg>
      </WindowButton>
      <WindowButton aria-label='Close' $close><Cross /></WindowButton>
    </TitleBar>

    <MenuBar>
      <Menus>
        {menus.map(([pre, key, post]) => (
          <button key={pre + key + post}>{pre}<u>{key}</u>{post}</button>
        ))}
      </Menus>
      <BarButtons>
        <BarButton aria-label='Comment'>
          <Svg w={18} h={14} box='0 0 16 14'>
            <path d='M1 1h14v10H5l-4 3z' fill='#fff' />
            <path d='M8 3v6M5 6h6' stroke='#444' strokeWidth='1.500' />
          </Svg>
        </BarButton>
        <BarButton>
          <Svg w={12} h={11} box='0 0 12 11'><path d='M0 10c.5-4 3-5.500 6-5.500V1l6 5-6 4.500V7.500C3.500 7.300 1.500 8 0 10z' fill='#5fa8f5' /></Svg>
          Share
        </BarButton>
        <BarButton $blue>
          <Svg w={11} h={14} box='0 0 11 14'><path d='M1 1l5 .5 4 3.500v4l-4 3.500L1 13v-2M1 1v2.500l3.500.5L7 6v2L4.500 10.500 1 11V7l3-.5' stroke='#cdd8e4' /></Svg>
          Buy Online Now
        </BarButton>
      </BarButtons>
      <Separator />
      <IconButton aria-label='Home'><MdHome size={16} /></IconButton>
      <IconButton aria-label='Settings'><MdSettings size={15} /></IconButton>
      <Separator />
      <Workspace><Cloud /> DigiPCBA Workspace</Workspace>
      <Separator />
      <IconButton aria-label='Account'><MdAccountCircle size={17} /></IconButton>
      <Caret />
    </MenuBar>

    <Main>
      <ProjectsPanel />
      <Center>
        <DocTabs>
          <DocTab><LibIcon />smart_car.SchLib</DocTab>
          <DocTab $active><SchIcon />[1] smart_car.SchDoc *</DocTab>
        </DocTabs>
        <Work>
          <Canvas>
            <Schematic />
            <ActiveBar>
              {toolIcons.map((icon, i) => (
                <Tool key={i} aria-label={`Tool ${i + 1}`} $menu={i !== 0 && i !== 4} $line={i === 4}>
                  <Svg>{icon}</Svg>
                </Tool>
              ))}
            </ActiveBar>
          </Canvas>
          <PropertiesPanel />
        </Work>
        <EditorTabs>
          <BottomTab $active $bold>Editor</BottomTab>
          <BottomTab>smart_car</BottomTab>
        </EditorTabs>
      </Center>
      <SideTabs>
        <button>Components</button>
        <button>Comments and Tasks</button>
        <button>Properties</button>
        <button>SCH List</button>
      </SideTabs>
    </Main>

    <StatusBar>
      <span>X:21100.000mil Y:2100.000mil</span>
      <span>Grid:100mil</span>
      <Separator />
      <Separator />
      <button>Panels</button>
    </StatusBar>
    <Taskbar />
  </Page>
)

/* ---------- styles ---------- */

const GlobalStyle = createGlobalStyle`
  * {
    box-sizing: border-box;
  }
  body {
    margin: 0;
    background: #333;
    color: #e6e6e6;
    font: 11px/16px 'Open Sans', 'Noto Sans', 'Noto Sans CJK SC', sans-serif;
  }
  h1, h2, h3, ul {
    margin: 0;
    padding: 0;
    font-size: inherit;
    font-weight: 400;
    list-style: none;
  }
  button, input, select {
    margin: 0;
    padding: 0;
    border: 0;
    background: none;
    color: inherit;
    font: inherit;
  }
  button {
    display: inline-flex;
    align-items: center;
    justify-content: center;
    white-space: nowrap;
  }
  svg {
    display: block;
    flex: none;
  }
`

const raised = css`
  border: 1px solid #262626;
  border-radius: 3px;
  background: #545454;
`

const sunken = css`
  border: 1px solid #232323;
  border-radius: 3px;
  background: #2e2e2e;
`

const Page = styled.div`
  display: flex;
  flex-direction: column;
  height: 100vh;
  min-width: 1280px;
  overflow: hidden;
`

const TitleBar = styled.header`
  display: flex;
  flex: none;
  height: 23px;
  border-bottom: 1px solid #333;
  background: #4e4e4e;
  h1 {
    flex: 1;
    color: #eee;
    font-size: 13px;
    line-height: 22px;
    text-align: center;
  }
`

const QuickAccess = styled.div`
  display: flex;
  align-items: center;
  gap: 6px;
  padding-left: 3px;
`

const IconButton = styled.button`
  flex: none;
  min-width: 16px;
  color: #fff;
`

const TitleSearch = styled.div`
  ${sunken}
  display: flex;
  align-items: center;
  gap: 5px;
  width: 150px;
  height: 21px;
  margin-right: 8px;
  padding-left: 6px;
  border-top: 0;
  input {
    width: 100%;
    outline: 0;
  }
  input::placeholder {
    color: #e6e6e6;
  }
`

const WindowButton = styled.button`
  width: 36px;
  height: 22px;
  background: ${({ $close }) => ($close ? '#a00000' : 'none')};
`

const MenuBar = styled.nav`
  display: flex;
  flex: none;
  align-items: center;
  gap: 6px;
  height: 29px;
  padding-right: 8px;
  background: #404040;
  font-size: 13px;
`

const Menus = styled.div`
  display: flex;
  flex: 1;
  gap: 16px;
  padding-left: 10px;
  u {
    text-underline-offset: 2px;
  }
`

const BarButtons = styled.div`
  display: flex;
  gap: 5px;
`

const BarButton = styled.button`
  ${raised}
  gap: 5px;
  height: 22px;
  padding: 0 7px;
  ${({ $blue }) => $blue && 'border-color: #6484a4; background: #6484a4; padding: 0 6px; gap: 7px;'}
`

const Separator = styled.i`
  flex: none;
  width: 1px;
  height: 16px;
  background: #262626;
`

const Workspace = styled.span`
  display: flex;
  align-items: center;
  gap: 5px;
`

const Main = styled.main`
  display: flex;
  flex: 1;
  min-height: 0;
  background: #333;
`

const LeftColumn = styled.aside`
  display: flex;
  flex: none;
  flex-direction: column;
  width: 283px;
  padding: 3px 3px 0;
`

const Panel = styled.section`
  display: flex;
  flex: 1;
  flex-direction: column;
  min-height: 0;
  padding-bottom: 8px;
  background: #404040;
`

const PanelHeader = styled.header`
  display: flex;
  flex: none;
  align-items: center;
  gap: 7px;
  height: 23px;
  padding: 0 6px 0 5px;
  background: ${({ $blue }) => ($blue ? '#6484a4' : '#505050')};
  h2 {
    flex: 1;
    padding-bottom: 2px;
    color: #fff;
    font-weight: 600;
  }
`

const PanelTools = styled.div`
  display: flex;
  align-items: center;
  gap: 11px;
  height: 37px;
  padding: 6px 0 0 14px;
  i {
    margin: 0 -5px;
  }
`

const TreeBox = styled.div`
  flex: 1;
  margin: 0 8px;
  padding: 4px 6px;
  border: 1px solid #262626;
  background: #3b3b3b;
`

const SearchField = styled.div`
  ${sunken}
  display: flex;
  flex: none;
  align-items: center;
  gap: 6px;
  height: 21px;
  padding-left: 6px;
  ${({ $wide }) => $wide && 'margin: 0 8px 0 12px;'}
  input {
    width: 100%;
    outline: 0;
  }
  input::placeholder {
    color: #e6e6e6;
  }
`

const TreeLine = styled.hr`
  height: 1px;
  margin: 5px 0 10px;
  border: 0;
  background: #262626;
`

const TreeRow = styled.div`
  display: flex;
  align-items: center;
  height: 16px;
  padding-left: ${({ $indent = 0 }) => $indent}px;
  background: ${({ $raised }) => ($raised ? '#505050' : 'none')};
  > svg + svg {
    margin-left: 5px;
  }
`

const TreeLabel = styled.span`
  display: flex;
  flex: 1;
  align-items: center;
  justify-content: space-between;
  height: 16px;
  padding: 0 22px 0 2px;
  font-weight: ${({ $bold }) => ($bold ? 600 : 400)};
  color: ${({ $bold }) => ($bold ? '#fff' : '#e0e0e0')};
  ${({ $outlined }) => $outlined && 'box-shadow: inset 0 0 0 1px #6484a4;'}
  ${({ $active }) => $active && 'background: #6484a4;'}
  ${({ $ruled }) => $ruled && 'box-shadow: 0 -1px #333, 0 1px #333;'}
`

const Dots = styled.span`
  margin-right: 3px;
  color: #fff;
  font-size: 9px;
`

const BottomTabs = styled.div`
  display: flex;
  flex: none;
  height: 23px;
`

const BottomTab = styled.button`
  height: 19px;
  padding: 0 5px;
  border: 1px solid #262626;
  border-radius: 0 0 3px 3px;
  background: ${({ $active }) => ($active ? '#505050' : '#3a3a3a')};
  font-weight: ${({ $bold }) => ($bold ? 600 : 400)};
  color: ${({ $active }) => ($active ? '#fff' : '#e6e6e6')};
`

const EditorTabs = styled(BottomTabs)`
  button {
    border-radius: 0;
  }
`

const Center = styled.div`
  display: flex;
  flex: 1;
  flex-direction: column;
  min-width: 0;
`

const DocTabs = styled.div`
  display: flex;
  flex: none;
  align-items: flex-end;
  height: 28px;
`

const DocTab = styled.button`
  gap: 4px;
  height: 25px;
  padding: 0 3px 0 5px;
  ${({ $active }) => $active && css`
    border: 1px solid #262626;
    border-bottom: 0;
    border-radius: 3px 3px 0 0;
    background: #555;
    padding: 0 3px;
  `}
`

const Work = styled.div`
  display: flex;
  flex: 1;
  min-height: 0;
`

const Canvas = styled.section`
  position: relative;
  flex: 1;
  min-width: 0;
  overflow: hidden;
  background: linear-gradient(#bebebe, #e3e3e3);
`

const SheetSvg = styled.svg`
  display: block;
`

const SheetText = styled.g`
  fill: ${({ $blue }) => ($blue ? '#000080' : '#111')};
  font: 7px 'Liberation Serif', serif;
`

const ActiveBar = styled.div`
  position: absolute;
  top: 3px;
  left: 616px;
  display: flex;
  padding: 0 5px 0 4px;
  border-radius: 4px;
  background: #404040;
`

const Tool = styled.button`
  position: relative;
  width: 28px;
  height: 28px;
  ${({ $line }) => $line && css`
    background: linear-gradient(#2a2a2a, #2a2a2a) left / 1px 16px no-repeat;
  `}
  ${({ $menu }) => $menu && css`
    &::after {
      content: '';
      position: absolute;
      right: 0;
      bottom: 1px;
      width: 5px;
      height: 5px;
      background: #fff;
      clip-path: polygon(100% 0, 100% 100%, 0 100%);
    }
  `}
`

const RightColumn = styled.aside`
  display: flex;
  flex: none;
  flex-direction: column;
  width: 280px;
  margin-bottom: -20px;
  padding-top: 1px;
  border: solid #262626;
  border-width: 0 1px 1px;
  background: #404040;
  z-index: 1;
`

const ScopeRow = styled.div`
  display: flex;
  flex: none;
  align-items: center;
  justify-content: space-between;
  height: 24px;
  margin: 9px 8px 10px 12px;
  span:nth-child(2) {
    margin-left: 3px;
  }
`

const FilterGroup = styled.div`
  ${raised}
  display: flex;
  height: 25px;
  button:first-child {
    width: 27px;
    border-right: 1px solid #262626;
    border-radius: 2px 0 0 2px;
    background: #6484a4;
  }
  button:last-child {
    width: 14px;
  }
`

const PropertyTabs = styled.div`
  display: flex;
  flex: none;
  height: 32px;
  margin: 0 10px 0 12px;
  padding: 13px 0 0 9px;
  border-bottom: 1px solid #262626;
`

const PropertyTab = styled.button`
  padding: 0 5px;
  border: 1px solid #262626;
  border-bottom: 0;
  border-radius: 3px 3px 0 0;
  background: ${({ $active }) => ($active ? '#4a4a4a' : '#383838')};
  color: ${({ $active }) => ($active ? '#fff' : '#e6e6e6')};
`

const ScrollArea = styled.div`
  display: flex;
  flex: 1;
  gap: 5px;
  min-height: 0;
  padding: 0 13px 0 12px;
  overflow: hidden;
`

const Sections = styled.div`
  flex: 1;
  min-width: 0;
`

const SectionTitle = styled.h3`
  display: flex;
  align-items: center;
  gap: 3px;
  height: ${({ $clipped }) => ($clipped ? 13 : 33)}px;
  padding-top: ${({ $clipped }) => ($clipped ? 0 : 10)}px;
  padding-bottom: ${({ $clipped }) => ($clipped ? 11 : 0)}px;
  color: #fff;
  font-weight: 600;
`

const Section = styled.section`
  padding: 6px 6px 7px;
  border-radius: 3px;
  background: #4a4a4a;
`

const FilterRow = styled.div`
  display: flex;
  gap: 4px;
  margin-top: 4px;
`

const FilterButton = styled.button`
  ${raised}
  height: 25px;
  padding: 0 8px;
  background: #6484a4;
  color: #fff;
  ${({ $all }) => $all && 'width: 73px; height: 23px; background: #545454;'}
`

const GroupLabel = styled.div`
  height: 16px;
  margin-top: ${({ $bright }) => ($bright ? 2 : 0)}px;
  line-height: 14px;
  color: ${({ $bright }) => ($bright ? '#fff' : '#dadada')};
`

const Segmented = styled.div`
  ${raised}
  display: flex;
  height: 23px;
  overflow: hidden;
  button {
    flex: 1 1 0;
    color: #fff;
  }
  button + button {
    border-left: 1px solid #262626;
  }
  .on {
    background: #6484a4;
  }
`

const Rule = styled.hr`
  height: 1px;
  margin: 12px 0 11px;
  border: 0;
  background: #262626;
`

const Field = styled.div`
  display: grid;
  grid-template-columns: 98px minmax(0, 1fr);
  align-items: center;
  column-gap: 12px;
  height: ${({ $h }) => $h}px;
  > :first-child {
    text-align: right;
  }
`

const SizeField = styled(Field)`
  position: relative;
  margin-top: 19px;
`

const SizeValue = styled.span`
  display: flex;
  gap: 3px;
  padding-left: 14px;
  white-space: nowrap;
`

const SizeMenu = styled.ul`
  position: absolute;
  bottom: 100%;
  left: 110px;
  width: 60px;
  border: 1px solid #222;
  background: #2d2d2d;
  color: #fff;
`

const SizeOption = styled.li`
  padding: 0 5px;
  line-height: 18px;
  white-space: nowrap;
  &[aria-selected='true'] {
    background: #6484a4;
  }
`

const Inline = styled.div`
  display: flex;
  align-items: center;
  gap: 2px;
`

const TextInput = styled.input`
  ${sunken}
  flex: 1;
  width: 100%;
  min-width: 0;
  height: 20px;
  padding: 0 5px;
  color: #fff;
`

const EyeButton = styled.button`
  ${raised}
  width: 22px;
  height: 22px;
`

const GridKey = styled.span`
  width: 22px;
  color: #909090;
  text-align: center;
`

const Clipped = styled.span`
  overflow: hidden;
  text-align: right;
  white-space: nowrap;
`

const FontLink = styled.a`
  justify-self: start;
  max-width: 100%;
  border-bottom: 1px dashed #84b8f0;
  color: #84b8f0;
  line-height: 15px;
  white-space: nowrap;
  text-decoration: none;
`

const SelectBox = styled.span`
  ${raised}
  position: relative;
  display: flex;
  flex: none;
  align-items: center;
  ${({ $small }) => $small && 'width: 34px;'}
  height: 21px;
  background: linear-gradient(#5e5e5e, #4b4b4b);
  select {
    width: 100%;
    height: 100%;
    padding: 0 14px 0 5px;
    appearance: none;
    color: #fff;
  }
  svg {
    position: absolute;
    right: 5px;
    pointer-events: none;
  }
`

const Check = styled.label`
  display: flex;
  flex: 1;
  align-items: center;
  gap: 4px;
  white-space: nowrap;
  input {
    ${raised}
    display: grid;
    flex: none;
    place-items: center;
    width: 16px;
    height: 16px;
    appearance: none;
  }
  input:checked::before {
    content: '';
    width: 8px;
    height: 4px;
    margin-top: -3px;
    border: solid #e6e6e6;
    border-width: 0 0 1px 1px;
    transform: rotate(-45deg);
  }
`

const ScrollTrack = styled.div`
  display: flex;
  flex-direction: column;
  align-items: center;
  gap: 8px;
  width: 6px;
  height: 784px;
  padding-top: 8px;
  i {
    flex: 1;
    width: 6px;
    margin-top: 11px;
    border-radius: 3px;
    background: #8a8a8a;
  }
`

const Selected = styled.footer`
  flex: none;
  padding: 0 7px;
  line-height: 13px;
`

const SideTabs = styled.div`
  display: flex;
  flex: none;
  flex-direction: column;
  gap: 3px;
  width: 26px;
  margin: 3px 2px 4px 0;
  padding: 1px 3px 0;
  background: #404040;
  button {
    ${raised}
    width: 20px;
    padding: 4px 0;
    background: #4e4e4e;
    writing-mode: vertical-rl;
  }
`

const StatusBar = styled.footer`
  display: flex;
  flex: none;
  align-items: center;
  height: 24px;
  padding: 0 5px;
  background: #404040;
  span {
    width: 158px;
  }
  span + span {
    width: 323px;
  }
  i + i {
    margin-left: 485px;
  }
  button {
    ${raised}
    height: 18px;
    margin-left: auto;
    padding: 0 4px;
  }
`

const TaskbarBox = styled.footer`
  display: flex;
  flex: none;
  gap: 1px;
  height: 40px;
  background: #1c1c1c;
`

const TaskButton = styled.button`
  flex: none;
  width: 48px;
  ${({ $app }) => $app && css`
    background: linear-gradient(#76b9ed, #76b9ed) bottom / 40px 2px no-repeat;
  `}
  ${({ $active }) => $active && css`
    background-color: #474747;
    background-size: 48px 2px;
  `}
`

const Tray = styled.div`
  display: flex;
  flex: 1;
  align-items: center;
  justify-content: flex-end;
  gap: 7px;
  color: #fff;
  font-size: 14px;
`

const Weather = styled.span`
  display: flex;
  align-items: center;
  gap: 8px;
  margin-right: 9px;
`

const Ime = styled.span`
  font: 16px/20px 'Noto Sans CJK SC', sans-serif;
  ${({ $boxed }) => $boxed && css`
    margin: 0 4px 0 8px;
    background: #fff;
    color: #1c1c1c;
    font-size: 14px;
    line-height: 15px;
  `}
`

const Clock = styled.span`
  position: relative;
  display: flex;
  flex-direction: column;
  align-items: center;
  width: 72px;
  margin-right: 6px;
  font-size: 12px;
  line-height: 19px;
`

const Watermark = styled.span`
  position: absolute;
  top: 12px;
  left: 12px;
  color: rgba(255, 255, 255, 0.5);
  font-size: 14px;
  line-height: 20px;
  white-space: nowrap;
`

const DesktopEdge = styled.i`
  width: 5px;
  height: 40px;
  margin-left: 13px;
  border-left: 1px solid #777;
`

export default App
